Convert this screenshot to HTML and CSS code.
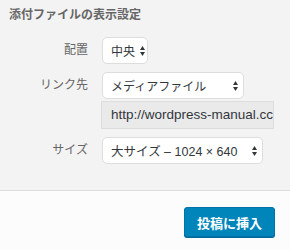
FILE: index.html
```html
<!DOCTYPE html>
<html lang="ja">
<head>
    <meta charset="UTF-8">
    <meta name="viewport" content="width=device-width, initial-scale=1.0">
    <title>添付ファイルの表示設定</title>
    <link rel="stylesheet" href="styles.css">
</head>
<body>

    <div class="sidebar">
        <h2 class="title">添付ファイルの表示設定</h2>

        <div class="settings">
            <span class="name">配置</span>
            <div class="select select-align">
                <span>中央</span>
                <svg class="arrows" width="5" height="10" viewBox="0 0 5 10"><path d="M0 4 L2.5 0 L5 4 Z M0 6 L2.5 10 L5 6 Z"/></svg>
            </div>

            <span class="name">リンク先</span>
            <div class="link-group">
                <div class="select select-link">
                    <span>メディアファイル</span>
                    <svg class="arrows" width="5" height="10" viewBox="0 0 5 10"><path d="M0 4 L2.5 0 L5 4 Z M0 6 L2.5 10 L5 6 Z"/></svg>
                </div>
                <div class="url">http://wordpress-manual.cc</div>
            </div>

            <span class="name">サイズ</span>
            <div class="select select-size">
                <span>大サイズ – 1024 × 640</span>
                <svg class="arrows" width="5" height="10" viewBox="0 0 5 10"><path d="M0 4 L2.5 0 L5 4 Z M0 6 L2.5 10 L5 6 Z"/></svg>
            </div>
        </div>
    </div>

    <div class="toolbar">
        <button class="button-primary">投稿に挿入</button>
    </div>

</body>
</html>
```

FILE: styles.css
```css
html, body {
    margin: 0;
    height: 100%;
}
body {
    font-family: "Liberation Sans", "Noto Sans CJK JP", sans-serif;
    background: #fcfcfc;
    color: #32373c;
    display: flex;
    flex-direction: column;
}
.sidebar {
    background: #f3f3f3;
    height: 190px;
    padding: 0 0 0 9px;
    border-bottom: 1px solid #dddddd;
}
.title {
    margin: 0;
    padding-top: 7px;
    font-size: 12px;
    line-height: 16px;
    font-weight: bold;
    color: #666666;
}
.settings {
    margin-top: 14px;
    display: grid;
    grid-template-columns: 79px auto;
    column-gap: 13px;
    row-gap: 8px;
    justify-items: start;
}
.name {
    justify-self: end;
    font-size: 12px;
    line-height: 27px;
    color: #666666;
}
.link-group {
    display: flex;
    flex-direction: column;
    gap: 2px;
}
.select {
    box-sizing: border-box;
    height: 27px;
    margin-left: 1px;
    padding: 0 5px 0 8px;
    display: flex;
    align-items: center;
    justify-content: space-between;
    background: #ffffff;
    border: 1px solid #dddddd;
    border-radius: 5px;
    font-size: 12px;
    color: #32373c;
}
.select span {
    white-space: nowrap;
}
.select-size span {
    font-size: 12.5px;
}
.arrows {
    flex: none;
    fill: #32373c;
}
.select-align {
    width: 46px;
    padding-right: 2px;
}
.select-link { width: 142px; }
.select-size { width: 161px; }
.url {
    box-sizing: border-box;
    width: 173px;
    height: 28px;
    padding: 0 9px;
    background: #eaeaea;
    border: 1px solid #dddddd;
    font-size: 13.5px;
    line-height: 26px;
    white-space: nowrap;
    overflow: hidden;
}
.toolbar {
    display: flex;
    justify-content: flex-end;
    padding: 16px 15px 0 0;
}
.button-primary {
    height: 30px;
    padding: 0 12px;
    font-family: inherit;
    font-size: 13px;
    font-weight: bold;
    color: #ffffff;
    background: #0085ba;
    border: 1px solid #0073aa;
    border-radius: 3px;
    box-shadow: 0 1px 0 #006799;
}
```
